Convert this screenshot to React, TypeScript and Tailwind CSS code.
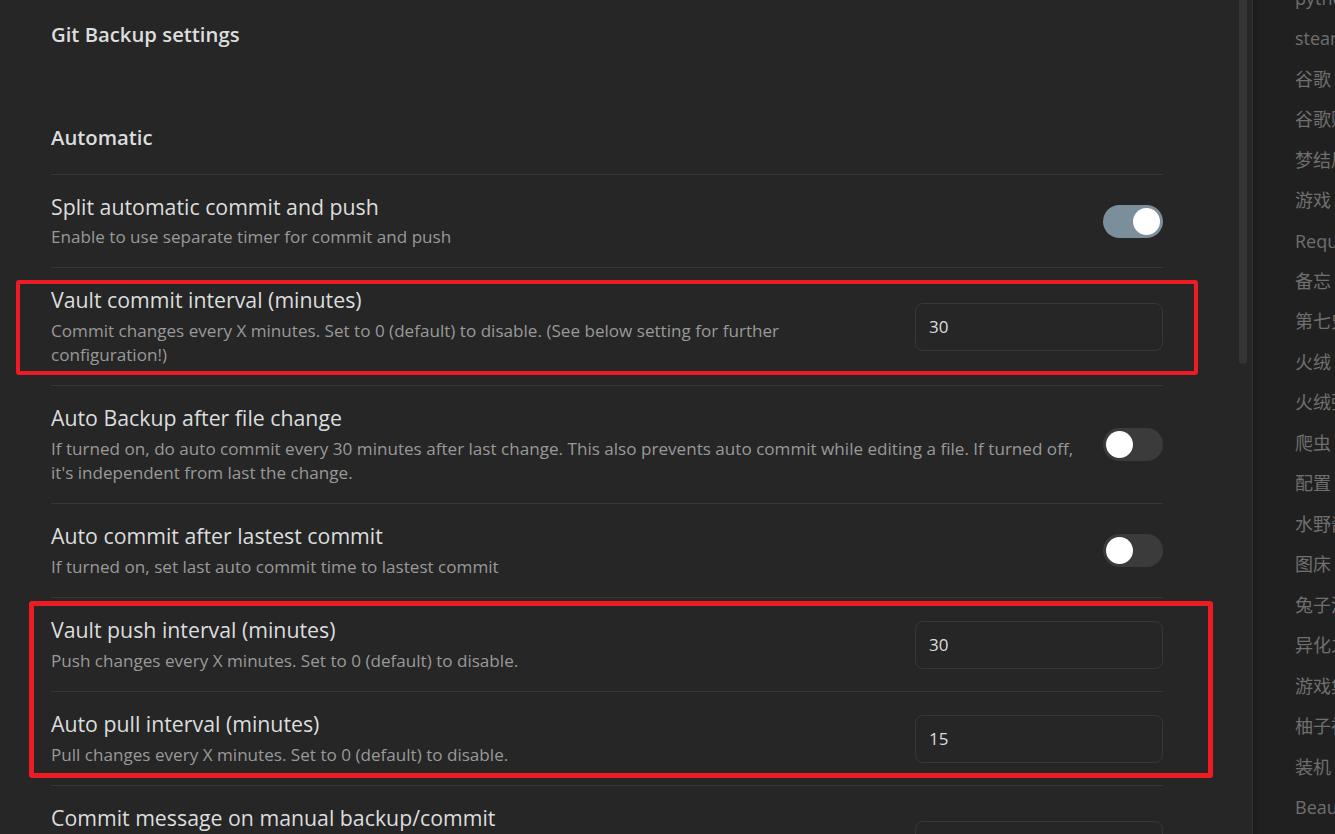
import React from "react";

type Row = {
  name: string;
  desc: React.ReactNode;
  control: { kind: "toggle"; on: boolean } | { kind: "input"; value: string };
};

const rows: Row[] = [
  {
    name: "Split automatic commit and push",
    desc: "Enable to use separate timer for commit and push",
    control: { kind: "toggle", on: true },
  },
  {
    name: "Vault commit interval (minutes)",
    desc: (
      <>
        Commit changes every X minutes. Set to 0 (default) to disable. (See below setting for further
        <br />
        configuration!)
      </>
    ),
    control: { kind: "input", value: "30" },
  },
  {
    name: "Auto Backup after file change",
    desc: (
      <>
        If turned on, do auto commit every 30 minutes after last change. This also prevents auto commit while editing a file. If turned off,
        <br />
        it's independent from last the change.
      </>
    ),
    control: { kind: "toggle", on: false },
  },
  {
    name: "Auto commit after lastest commit",
    desc: "If turned on, set last auto commit time to lastest commit",
    control: { kind: "toggle", on: false },
  },
  {
    name: "Vault push interval (minutes)",
    desc: "Push changes every X minutes. Set to 0 (default) to disable.",
    control: { kind: "input", value: "30" },
  },
  {
    name: "Auto pull interval (minutes)",
    desc: "Pull changes every X minutes. Set to 0 (default) to disable.",
    control: { kind: "input", value: "15" },
  },
  {
    name: "Commit message on manual backup/commit",
    desc: (
      <>
        Available placeholders: {"{{date}}"} (see below), {"{{hostname}}"} (see below) and {"{{numFiles}}"} (number of
        <br />
        changed files in the commit)
      </>
    ),
    control: { kind: "input", value: "vault backup: {{date}}" },
  },
];

const files = [
  "python笔记",
  "steam游戏",
  "谷歌 浏览器",
  "谷歌账号",
  "梦结局",
  "游戏 推荐",
  "Requests",
  "备忘 录",
  "第七史诗",
  "火绒 安全",
  "火绒弹窗",
  "爬虫 ",
  "配置 ",
  "水野酱",
  "图床 ",
  "兔子洞",
  "异化之地",
  "游戏集",
  "柚子社",
  "装机 ",
  "Beautiful",
];

function Toggle({ on }: { on: boolean }) {
  return (
    <div
      className={
        on
          ? "flex h-[33px] w-[60px] items-center justify-end rounded-full bg-[#7a8e9b] px-[3px]"
          : "flex h-[33px] w-[60px] items-center justify-start rounded-full bg-[#3b3b3b] px-[3px]"
      }
    >
      <div className="h-[27px] w-[27px] rounded-full bg-white" />
    </div>
  );
}

export default function App() {
  return (
    <div
      className="flex h-[834px] w-[1335px] overflow-hidden bg-[#262626]"
      style={{ fontFamily: '"Open Sans", "Noto Sans", sans-serif' }}
    >
      <main className="relative w-[1237px] shrink-0 pl-[51px]">
        <div className="w-[1112px]">
          <h1 className="mt-[20px] text-[20.3px] font-semibold leading-[28px] text-[#dcddde]">
            Git Backup settings
          </h1>
          <h2 className="mt-[75px] pb-[23px] text-[20.3px] font-semibold leading-[28px] text-[#dcddde]">
            Automatic
          </h2>
          {rows.map((r, i) => (
            <div key={r.name} className="flex items-center border-t border-[#363636] py-[18px]">
              <div className="mr-[20px] flex-1">
                <div className="whitespace-nowrap text-[21.3px] leading-[28px] text-[#dcddde]">{r.name}</div>
                <div
                  className={
                    i === 0
                      ? "mt-[4px] whitespace-nowrap text-[17.1px] leading-[24px] text-[#999999]"
                      : "mt-[5px] whitespace-nowrap text-[17.1px] leading-[24px] text-[#999999]"
                  }
                >
                  {r.desc}
                </div>
              </div>
              {r.control.kind === "toggle" ? (
                <Toggle on={r.control.on} />
              ) : (
                <div className="flex h-[48px] w-[248px] items-center rounded-[8px] border border-[#383838] px-[13px] text-[17px] text-[#dcddde]">
                  {r.control.value}
                </div>
              )}
            </div>
          ))}
        </div>

        <div className="pointer-events-none absolute left-[16px] top-[280px] h-[95px] w-[1182px] rounded-[3px] border-[4px] border-[#ed1c24]" />
        <div className="pointer-events-none absolute left-[29px] top-[601px] h-[177px] w-[1184px] rounded-[3px] border-[5px] border-[#ed1c24]" />
      </main>

      <div className="w-[15px] shrink-0 pl-[2px]">
        <div className="h-[364px] w-[8px] rounded-b-full bg-[#353535]" />
      </div>

      <aside className="flex w-[83px] shrink-0 border-l border-[#333333] bg-[#202020]">
        <div className="w-[7px] shrink-0 bg-gradient-to-r from-[#1a1a1a] to-[#202020]" />
        <div
          className="-mt-[22px] flex-1 overflow-hidden pl-[35px] text-[18px] text-[#6f6f6f]"
          style={{ fontFamily: '"Open Sans", "Noto Sans CJK SC", sans-serif' }}
        >
          {files.map((f, i) => (
            <div key={i} className="flex h-[40.47px] items-center whitespace-nowrap">
              {f}
            </div>
          ))}
        </div>
      </aside>
    </div>
  );
}
